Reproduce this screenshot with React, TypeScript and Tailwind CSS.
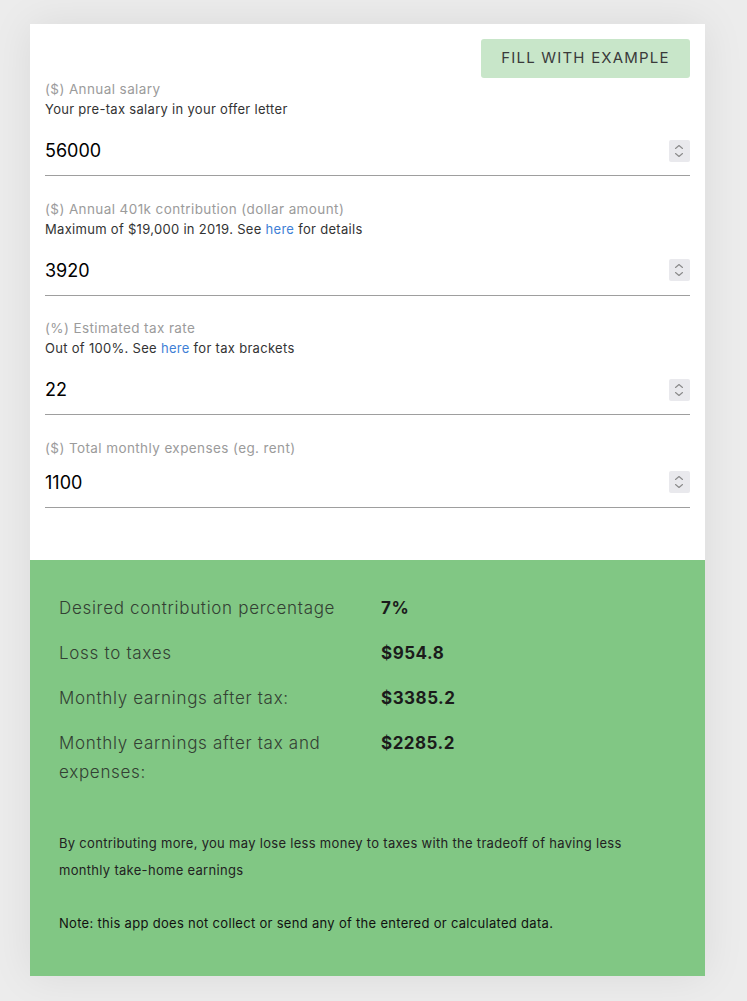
import React from "react";

type Field = {
  label: string;
  help?: React.ReactNode;
  value: string;
};

const fields: Field[] = [
  {
    label: "($) Annual salary",
    help: "Your pre-tax salary in your offer letter",
    value: "56000",
  },
  {
    label: "($) Annual 401k contribution (dollar amount)",
    help: (
      <>
        Maximum of $19,000 in 2019. See{" "}
        <a href="#" className="text-[#3f7fd6]">here</a> for details
      </>
    ),
    value: "3920",
  },
  {
    label: "(%) Estimated tax rate",
    help: (
      <>
        Out of 100%. See <a href="#" className="text-[#3f7fd6]">here</a> for tax brackets
      </>
    ),
    value: "22",
  },
  {
    label: "($) Total monthly expenses (eg. rent)",
    value: "1100",
  },
];

const results = [
  { label: "Desired contribution percentage", value: "7%" },
  { label: "Loss to taxes", value: "$954.8" },
  { label: "Monthly earnings after tax:", value: "$3385.2" },
  { label: "Monthly earnings after tax and expenses:", value: "$2285.2" },
];

function Spinner() {
  return (
    <div className="flex h-[22px] w-[22px] items-center justify-center rounded-[2px] bg-[#e9e9ed]">
      <svg width="12" height="16" viewBox="0 0 12 16" fill="none" stroke="#8a8a8a" strokeWidth="1.1" strokeLinecap="round" strokeLinejoin="round">
        <path d="M2.5 5.5 L6 2.5 L9.5 5.5" />
        <path d="M2.5 10.5 L6 13.5 L9.5 10.5" />
      </svg>
    </div>
  );
}

function InputField({ field }: { field: Field }) {
  return (
    <div className="mt-[22.5px] first:mt-0">
      <div className="text-[13.5px] leading-[20px] tracking-[0.4px] text-[#9b9b9b]">{field.label}</div>
      {field.help && (
        <div className="mb-[7px] text-[13px] leading-[20px] tracking-[0.3px] text-[#333]">{field.help}</div>
      )}
      <div className="flex h-[50px] items-center justify-between border-b border-[#9e9e9e]">
        <input
          type="text"
          defaultValue={field.value}
          className="w-full bg-transparent text-[18px] text-black outline-none"
        />
        <Spinner />
      </div>
    </div>
  );
}

export default function App() {
  return (
    <div className="min-h-screen bg-[#ececec] px-[30px] pt-[24px] pb-[26px] font-['Inter',sans-serif]">
      <div className="w-[675px] shadow-[0_0_40px_rgba(0,0,0,0.08)]">
        <div className="bg-white px-[15px] pt-[15px] pb-[52px]">
          <div className="flex justify-end">
            <button className="h-[39px] w-[209px] rounded-[3px] bg-[#c8e6c9] text-[15px] tracking-[1.2px] text-[#3a3a3a]">
              FILL WITH EXAMPLE
            </button>
          </div>
          <div className="pt-[1px]">
            {fields.map((f) => (
              <InputField key={f.label} field={f} />
            ))}
          </div>
        </div>

        <div className="bg-[#81c784] px-[29px] pt-[34px] pb-[39px]">
          <div className="flex flex-col gap-[16px]">
            {results.map((r) => (
              <div key={r.label} className="flex text-[17px] leading-[29px]">
                <div className="w-[300px] font-light tracking-[0.7px] text-[#334033]">{r.label}</div>
                <div className="ml-[22px] font-bold tracking-[0.5px] text-[#1b1b1b]">{r.value}</div>
              </div>
            ))}
          </div>
          <p className="mt-[43px] text-[13px] leading-[27px] tracking-[0.3px] text-[#222]">
            By contributing more, you may lose less money to taxes with the tradeoff of having less
            monthly take-home earnings
          </p>
          <p className="mt-[26px] text-[13px] leading-[27px] tracking-[0.3px] text-[#111]">
            Note: this app does not collect or send any of the entered or calculated data.
          </p>
        </div>
      </div>
    </div>
  );
}
